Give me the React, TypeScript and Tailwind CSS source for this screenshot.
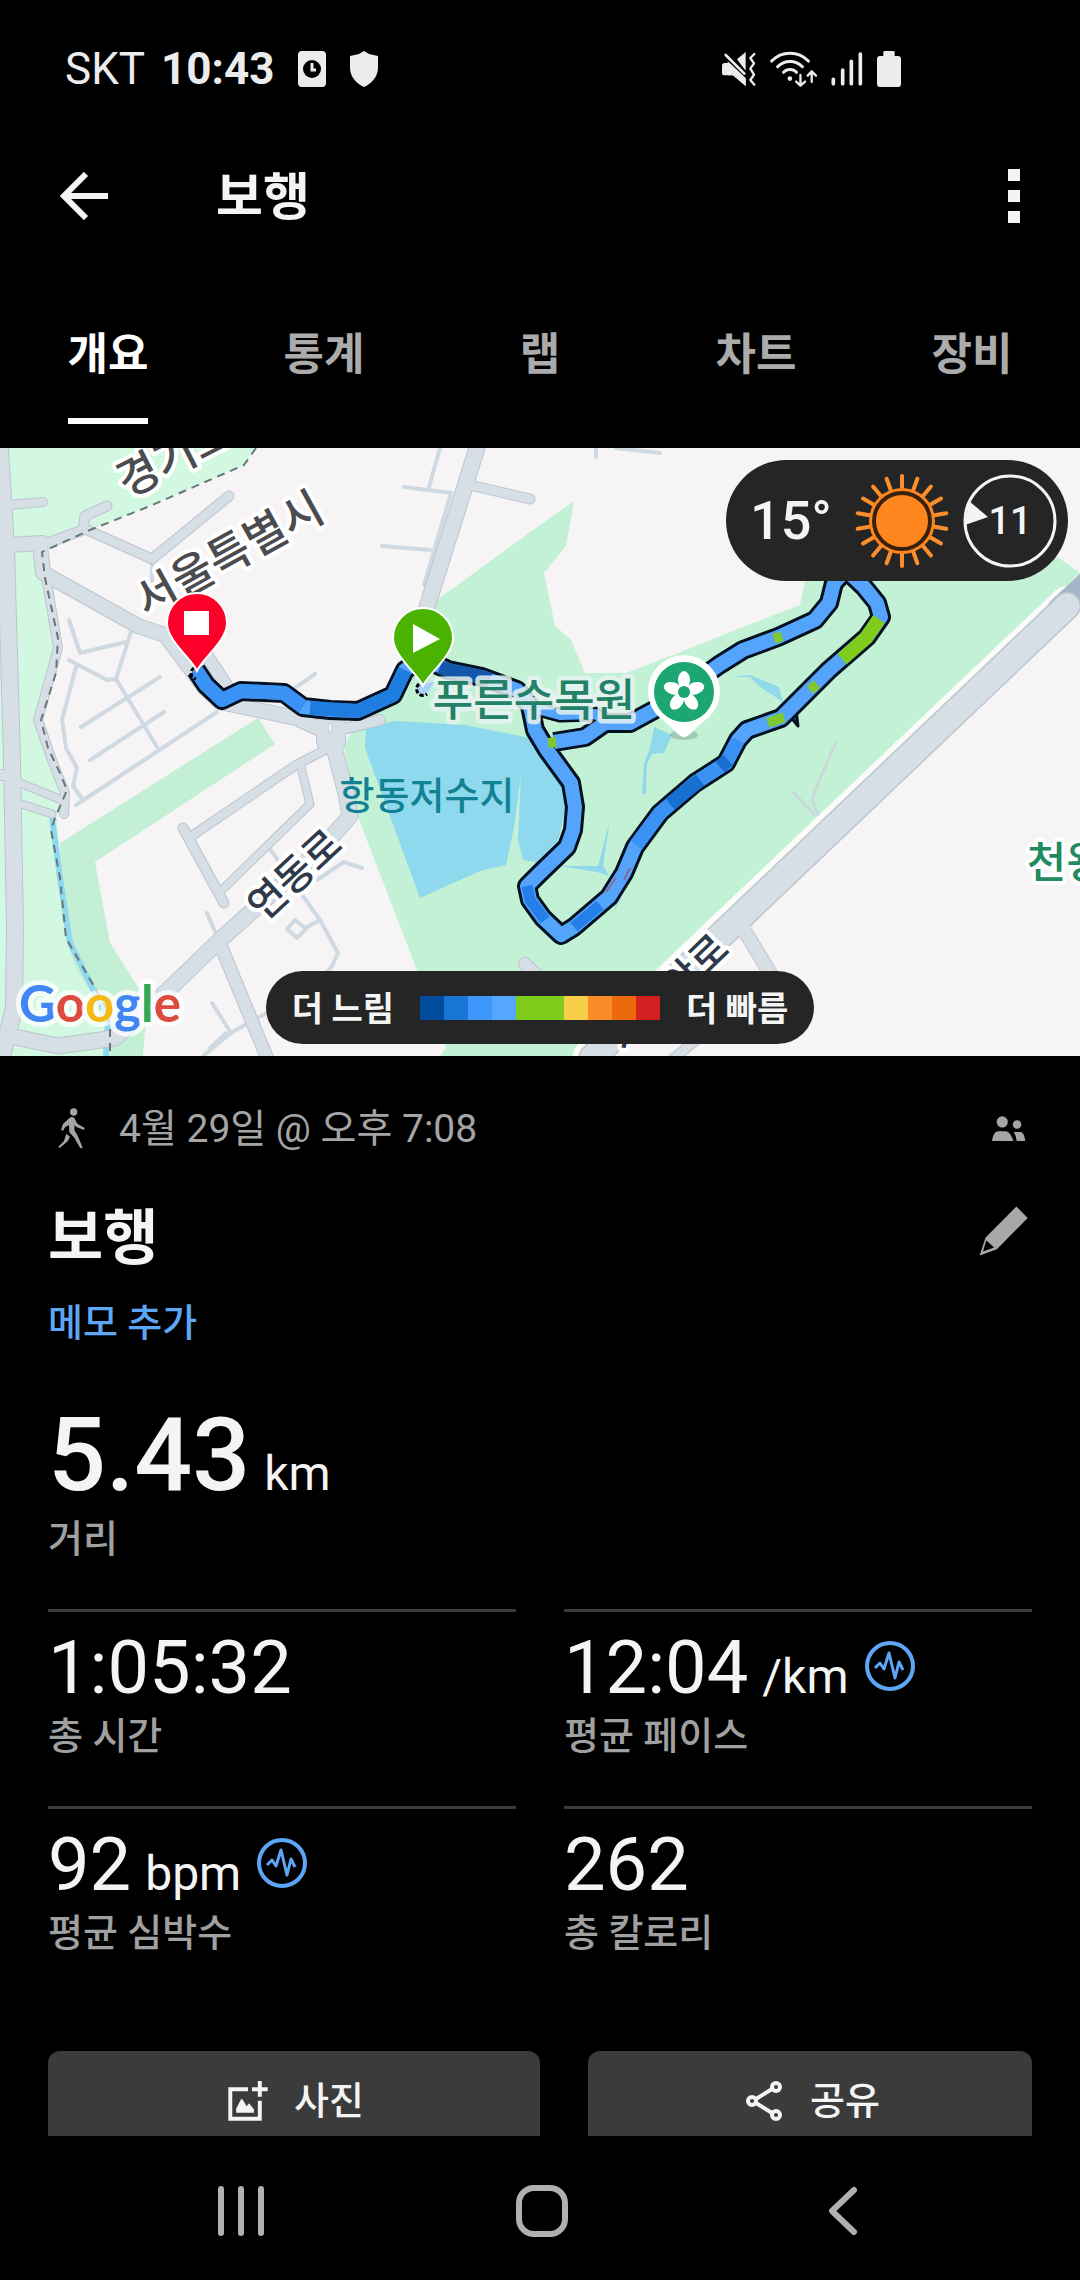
import { useState } from "react";

const TABS = ["개요", "통계", "랩", "차트", "장비"];

const PACE_COLORS = [
  "bg-[#004b9b]",
  "bg-[#1976d2]",
  "bg-[#3d96fb]",
  "bg-[#54a6ff]",
  "bg-[#80cc1c]",
  "bg-[#80cc1c]",
  "bg-[#f8cd48]",
  "bg-[#fa8b26]",
  "bg-[#ec690c]",
  "bg-[#d22120]",
];

const STATS = [
  { value: "1:05:32", unit: "", label: "총 시간", pulse: false },
  { value: "12:04", unit: "/km", label: "평균 페이스", pulse: true },
  { value: "92", unit: "bpm", label: "평균 심박수", pulse: true },
  { value: "262", unit: "", label: "총 칼로리", pulse: false },
];

/* ---------- MAP DATA ---------- */
const ROADS = [
  { d: "M0 0L6 100L12 312L15 480L14 560L2 608", w: 16 },
  { d: "M10 57L43 54", w: 8 },
  { d: "M8 97L42 95", w: 14 },
  { d: "M42 97L83 82L85 68L107 58", w: 9 },
  { d: "M83 80L152 111L229 48", w: 9 },
  { d: "M477 0L427 159L408 225", w: 15 },
  { d: "M474 38L530 51", w: 9 },
  { d: "M40 97L43 125L138 178L165 187L205 240L220 254L296 270L331 286", w: 14 },
  { d: "M205 205L232 246", w: 12 },
  { d: "M42 115L48 140L58 200L38 272L52 312L65 345L64 366", w: 8 },
  { d: "M331 278V292", w: 28 },
  { d: "M331 284L380 272", w: 10 },
  { d: "M332 292L346 345L350 368L322 400L220 492L165 545L115 590L58 598L10 588", w: 15 },
  { d: "M325 302L296 317L193 387", w: 8 },
  { d: "M301 319L310 356L268 397L224 440", w: 7 },
  { d: "M183 380L224 455", w: 9 },
  { d: "M220 496L268 612", w: 12 },
  { d: "M15 333L62 352", w: 7 },
  { d: "M15 354L52 366", w: 7 },
  { d: "M0 327H12", w: 10 },
  { d: "M525 516L548 538", w: 12 },
  { d: "M743 480L785 550", w: 13 },
  { d: "M672 612L725 568", w: 9 },
];

const STREETS =
  "M152 112V133M69 172L80 205L126 194M131 184L116 231L157 299M69 212L107 232L116 231M76 219L62 272L66 300L77 320L73 338L83 352M81 279L160 229M90 312L164 264M76 357L217 264M404 39L451 45M440 0L429 39M451 45L424 137M382 98L430 102M245 241L270 250M315 226L295 240M268 398L290 430L320 472L338 505L332 518L318 535M207 465L217 488M317 432L344 414L362 420M320 472L305 480L295 472L287 481L297 490L307 480M212 555L231 585L203 608M231 585L248 575L285 555M226 585L210 600M596 0V9M616 0L660 5";

const ROUTE =
  "M196 222L206 237L222 252L241 243L284 245L303 259L330 262L358 263L393 247L405 222L423 210L448 222L482 229L517 242L530 258L535 282L547 302L571 335L575 359L573 382L567 399L540 425L527 438L530 452L543 470L561 487L574 479L609 449L624 425L635 399L660 365L695 335L726 315L738 292L747 282L781 270L829 222L867 189L881 169L877 155L864 139L846 122L834 135L829 155L815 172L778 189L743 202L719 217L680 245L654 262L630 275L605 275L585 289L554 294";

const MapPin = ({ x, y, fill }: { x: number; y: number; fill: string }) => (
  <path
    transform={`translate(${x} ${y})`}
    d="M0 48C-5 36-30 18-30 0A30 30 0 0 1 30 0C30 18 5 36 0 48Z"
    fill={fill}
    stroke="#fff"
    strokeWidth="2"
  />
);

const RouteMap = () => (
  <svg
    viewBox="0 0 1080 608"
    preserveAspectRatio="xMidYMid slice"
    className="block w-full h-full font-[Roboto,'Noto_Sans_CJK_KR',sans-serif] font-medium"
  >
    <rect width="1080" height="608" fill="#f6f4f5" />

    {/* parks */}
    <path
      d="M0 0H256L244 17L150 58L90 82L42 104L58 200L38 272L60 330L57 370L66 480L110 560L140 608H0Z"
      fill="#d2f8e1"
    />
    <path
      d="M258 270L275 296L95 414L110 495L138 539L146 570L143 608H110L115 580L75 520L62 470L60 395Z"
      fill="#c3f0d4"
    />
    <path
      d="M540 77L437 152L418 200L385 250L355 275L344 299L358 369L417 522L446 600L440 608H590L709 482L905 292L1080 125L1056 108L1000 60L830 90L805 133L800 157L743 179L678 205L626 225H585L571 192L555 178L544 125L566 98L574 53Z"
      fill="#c3f1d5"
    />

    {/* water */}
    <path
      d="M366 279L396 273L465 277L540 292L566 330V358L557 398L540 415L523 412L518 392L521 327L514 380L506 417L480 423L420 450L365 300Z"
      fill="#8fd9ee"
    />
    <path
      d="M731 229L750 227L779 239L783 254L760 239L750 229ZM654 279L672 287L664 305L652 306L647 316L646 346H642L644 315L650 300ZM560 418L598 418L610 372L603 417L609 428L597 424ZM618 448L621 450L614 464Z"
      fill="#90d9ea"
    />
    <path d="M52 370L60 430L70 495L95 545L108 570L106 608" fill="none" stroke="#8fd9ee" strokeWidth="6" />

    {/* roads */}
    <g fill="none" strokeLinecap="round" strokeLinejoin="round">
      <path d={STREETS} stroke="#cfd9e1" strokeWidth="4" />
      <path d="M836 294L816 340L812 352L821 374M793 344L814 366" stroke="#ccd8dc" strokeWidth="3" />
      {ROADS.map((r) => (
        <path key={r.d} d={r.d} stroke="#bcc5cf" strokeWidth={r.w + 2} />
      ))}
      <path d="M590 608L1067 155" stroke="#fbfbf8" strokeWidth="34" />
      <path d="M1060 162L1100 125" stroke="#a5b5c8" strokeWidth="26" />
      <path d="M592 610L1067 158" stroke="#bcc5cf" strokeWidth="28" />
      {ROADS.map((r) => (
        <path key={r.d} d={r.d} stroke="#d6dee6" strokeWidth={r.w} />
      ))}
      <path d="M592 610L1067 158" stroke="#d6dee6" strokeWidth="25" />
    </g>
    <ellipse cx="330" cy="280" rx="2" ry="5" fill="#f6f4f5" stroke="#bcc5cf" />
    <path
      d="M256 0L244 17L150 58L90 82L42 104L45 130L58 190L56 225L41 272L48 300L60 325L67 342L55 370L51 382L60 430L66 490L95 540L106 560L110 580V608"
      fill="none"
      stroke="#68767c"
      strokeWidth="2"
      strokeDasharray="8 6"
    />

    {/* area and road names */}
    <g textAnchor="middle" paintOrder="stroke" stroke="#fff" strokeWidth="8" strokeLinejoin="round">
      <text transform="translate(175 8) rotate(-27)" y="16" fontSize="45" fill="#4a4c50">
        경기도
      </text>
      <text transform="translate(229 106) rotate(-29)" y="16" fontSize="45" fill="#4a4c50">
        서울특별시
      </text>
      <text transform="translate(294 426) rotate(-43)" y="15" fontSize="40" fill="#2e3a4c">
        연동로
      </text>
      <text transform="translate(668 544) rotate(-44)" y="15" fontSize="40" fill="#2e3a4c">
        서해안로
      </text>
      <text x="427" y="361" fontSize="38" fill="#128292" stroke="none">
        항동저수지
      </text>
      <text x="1086" y="430" fontSize="43" fill="#218a62">
        천왕산
      </text>
    </g>

    {/* walked route */}
    <g fill="none" strokeLinejoin="round">
      <path d="M790 268L798 278L796 262" fill="#1976d2" stroke="#001220" strokeWidth="3" />
      <path d={ROUTE} stroke="#03101f" strokeWidth="20" />
      <path d="M530 259L560 267L595 266L610 275" stroke="#03101f" strokeWidth="15" />
      <path d={ROUTE} stroke="#54a4fc" strokeWidth="14" />
      <path d="M530 259L560 267L595 266L610 275" stroke="#54a4fc" strokeWidth="10" />
      <path d="M196 222L206 237L222 252L241 243L284 245L303 259" stroke="#3a92f5" strokeWidth="14" />
      <path d="M310 260L358 263L393 247L405 222" stroke="#1f7de0" strokeWidth="14" />
      <path d="M440 219L448 222L482 229L490 232" stroke="#1257ac" strokeWidth="14" />
      <path d="M527 438L530 452L545 472M574 479L600 457" stroke="#2480e8" strokeWidth="11" />
      <path d="M636 397L660 365L695 335L726 315L738 292" stroke="#3a92f5" strokeWidth="14" />
      <path d="M670 356L700 332M720 319L728 312" stroke="#1770d0" strokeWidth="14" />
      <path d="M630 420L624 432M616 430L606 444" stroke="#8a6a90" strokeWidth="2" />
      <path d="M879 171L866 190L842 211" stroke="#80cc1c" strokeWidth="14" />
      <path d="M774 191L782 188M810 242L817 236M768 275L784 269M548 295L556 294" stroke="#80c832" strokeWidth="10" />
    </g>

    {/* arboretum */}
    <text
      x="534"
      y="268"
      fontSize="44"
      textAnchor="middle"
      paintOrder="stroke"
      stroke="#e8f3f1"
      strokeOpacity="0.85"
      strokeWidth="9"
      strokeLinejoin="round"
      fill="#238167"
    >
      푸른수목원
    </text>
    <ellipse cx="684" cy="287" rx="14" ry="5" fill="#6f9480" opacity="0.4" />
    <path d="M684 289C678 289 674 280 660 270A36 36 0 1 1 708 270C694 280 690 289 684 289Z" fill="#fff" />
    <circle cx="684" cy="244" r="30" fill="#1ba672" />
    <g fill="#fff">
      {[0, 72, 144, 216, 288].map((a) => (
        <ellipse key={a} cx="684" cy="232" rx="6" ry="9" transform={`rotate(${a} 684 244)`} />
      ))}
    </g>
    <circle cx="684" cy="244" r="6" fill="#1ba672" />

    {/* start and finish */}
    <path d="M194 220A6 6 0 0 0 196 231" fill="none" stroke="#000" strokeWidth="3" strokeDasharray="4 2" />
    <MapPin x={197} y={175} fill="#fd0029" />
    <rect x="184" y="163" width="25" height="24" fill="#fff" />
    <path d="M419 236A6 6 0 0 0 427 246L434 234Z" fill="#a9d0f8" />
    <path d="M419 236A6 6 0 0 0 427 246" fill="none" stroke="#000" strokeWidth="3" strokeDasharray="4 2" />
    <MapPin x={423} y={190} fill="#4ab200" />
    <path d="M413 176V205L440 191Z" fill="#fff" />

    {/* map provider */}
    <g
      className="font-[Lato,sans-serif] font-bold"
      paintOrder="stroke"
      stroke="#fff"
      strokeOpacity="0.75"
      strokeWidth="10"
      strokeLinejoin="round"
    >
      <text x="19" y="574" fontSize="51">
        <tspan fill="#4285f4">G</tspan>
        <tspan fill="#dd4b3e">o</tspan>
        <tspan fill="#f5ba15">o</tspan>
        <tspan fill="#4285f4">g</tspan>
        <tspan fill="#34a853">l</tspan>
        <tspan fill="#dd4b3e">e</tspan>
      </text>
    </g>
  </svg>
);

const SunIcon = () => (
  <svg viewBox="-48 -48 96 96" className="size-24">
    <g stroke="#fb8f2c" strokeWidth="4" strokeLinecap="round">
      {Array.from({ length: 18 }, (_, i) => (
        <line key={i} y1="-33" y2="-45" transform={`rotate(${i * 20})`} />
      ))}
    </g>
    <circle r="33" fill="#ff861f" />
    <circle r="28" fill="none" stroke="#38220f" strokeWidth="4" />
  </svg>
);

const PulseIcon = () => (
  <svg viewBox="-25 -25 50 50" className="mb-1 w-[50px] h-[50px]" fill="none" stroke="#5da6f6">
    <circle r="23" strokeWidth="4" />
    <path d="M-15 2L-10 -3L-6 3L-1 -13L5 12L9 -4L13 4" strokeWidth="3" strokeLinejoin="round" />
  </svg>
);

const StatusBar = () => (
  <div className="flex h-[138px] items-center justify-between pl-[65px] pr-[179px] text-[#ececec]">
    <div className="flex items-center">
      <span className="text-[44px] leading-[48px]">SKT</span>
      <span className="ml-4 text-[44px] leading-[48px] font-bold">10:43</span>
      <svg viewBox="0 0 28 36" className="ml-6 h-9 w-7">
        <rect width="28" height="36" rx="4" fill="#ececec" />
        <circle cx="14" cy="18" r="9" fill="#000" />
        <path d="M14 12V19H18" fill="none" stroke="#ececec" strokeWidth="3" />
      </svg>
      <svg viewBox="0 0 28 36" className="ml-6 h-9 w-7">
        <path d="M14 0L19 3L28 5V17C28 26 21 33 14 36C7 33 0 26 0 17V5L9 3Z" fill="#ececec" />
      </svg>
    </div>
    <div className="flex items-center gap-3.5">
      <svg viewBox="123 60 102 106" className="h-9 w-[34px]">
        <path d="M131 95H146L194 140V164L156 132H131Q123 132 123 124V103Q123 95 131 95ZM194 62V118L168 84Z" fill="#ececec" />
        <path d="M146 76L200 130" stroke="#000" strokeWidth="8" />
        <path d="M134 71L190 127" stroke="#ececec" strokeWidth="8" strokeLinecap="round" />
        <path d="M140 90L194 144V164L156 132H140Z" fill="#ececec" />
        <path d="M220 68L208 80L219 96L208 112L219 130L208 146L220 160" fill="none" stroke="#ececec" strokeWidth="7" strokeLinecap="round" strokeLinejoin="round" />
      </svg>
      <svg viewBox="270 60 142 108" className="h-9 w-[47px]" fill="none" stroke="#ececec" strokeLinecap="round" strokeLinejoin="round">
        <path d="M275 90A77 77 0 0 1 386 90M293 107A52 52 0 0 1 368 107M311 124A27 27 0 0 1 350 124" strokeWidth="9" />
        <circle cx="330" cy="143" r="7" fill="#ececec" stroke="none" />
        <path d="M362 132V163M349 152L362 164L376 152M396 153V122M384 134L396 121L409 134" strokeWidth="7" />
      </svg>
      <svg viewBox="444 62 96 104" className="h-9 w-8" stroke="#ececec" strokeWidth="11" strokeLinecap="round">
        <path d="M451 145V158M479 117V158M505 91V158M532 69V158" />
      </svg>
      <svg viewBox="591 60 72 108" className="h-9 w-6" fill="#ececec">
        <rect x="610" y="60" width="34" height="24" rx="4" />
        <rect x="591" y="75" width="72" height="93" rx="9" />
      </svg>
    </div>
  </div>
);

const App = () => {
  const [activeTab, setActiveTab] = useState("개요");

  return (
    <div className="flex h-screen flex-col bg-black text-[#f4f4f4] font-[Roboto,'Noto_Sans_CJK_KR',sans-serif]">
      <StatusBar />

      {/* HEADER */}
      <header className="flex h-[116px] items-center px-[60px]">
        <button aria-label="뒤로">
          <svg viewBox="0 0 48 48" className="size-12" fill="none" stroke="#f4f4f4" strokeWidth="6">
            <path d="M26 2L4 24L26 46M5 24H48" />
          </svg>
        </button>
        <h1 className="ml-[108px] flex-1 pt-1 text-[51px] leading-[60px] font-bold">보행</h1>
        <button aria-label="더보기" className="flex flex-col gap-[9px]">
          <span className="size-3 bg-[#f4f4f4]" />
          <span className="size-3 bg-[#f4f4f4]" />
          <span className="size-3 bg-[#f4f4f4]" />
        </button>
      </header>

      {/* TABS */}
      <nav className="grid h-[194px] shrink-0 grid-cols-5 items-end pb-6">
        {TABS.map((tab) => (
          <button
            key={tab}
            onClick={() => setActiveTab(tab)}
            className={
              tab === activeTab
                ? "justify-self-center border-b-6 border-white pb-[39px] text-[44px] leading-[48px] font-bold text-white"
                : "justify-self-center border-b-6 border-transparent pb-[39px] text-[44px] leading-[48px] font-bold text-[#ababab]"
            }
          >
            {tab}
          </button>
        ))}
      </nav>

      <main className="min-h-0 flex-1 overflow-hidden">
        {/* MAP */}
        <section className="relative h-[608px] overflow-hidden">
          <RouteMap />
          <div className="absolute top-3 right-3 flex h-[121px] items-center rounded-full bg-[#252525] pl-6 pr-2.5">
            <span className="mr-[22px] text-[54px] leading-[60px] font-medium">15°</span>
            <SunIcon />
            <span className="relative ml-3 flex size-24 items-center justify-center">
              <svg viewBox="-48 -48 96 96" className="absolute inset-0">
                <circle r="45" fill="none" stroke="#f4f4f4" strokeWidth="3" />
                <path d="M-41 -20L-22 -4L-45 4Z" fill="#f4f4f4" />
              </svg>
              <span className="text-[38px] leading-[48px] font-medium">11</span>
            </span>
          </div>
          <div className="absolute inset-x-0 bottom-3 flex justify-center">
            <div className="flex h-[73px] items-center gap-[26px] rounded-full bg-[#252525] px-[26px] text-[34px] leading-[48px] font-bold">
              <span className="pt-0.5">더 느림</span>
              <span className="flex">
                {PACE_COLORS.map((color, i) => (
                  <span key={i} className={`size-6 ${color}`} />
                ))}
              </span>
              <span className="pt-0.5">더 빠름</span>
            </div>
          </div>
        </section>

        {/* SUMMARY */}
        <section className="px-12">
          <div className="flex h-36 items-center text-[39px] leading-[48px] text-[#a5a5a5]">
            <svg viewBox="55 37 81 123" className="ml-2.5 h-[41px] w-[27px]" fill="#a5a5a5">
              <circle cx="102" cy="49" r="11" />
              <path d="M90 66Q97 62 104 67L113 84L135 97L133 103L110 94L105 88L104 104L113 118L129 156L122 158L104 126L89 110L88 88L77 94L70 105L64 103L70 85Z" />
              <path d="M80 114L91 123L84 137L60 157L56 153L73 136Z" />
            </svg>
            <p className="ml-[34px] flex-1 pt-0.5">4월 29일 @ 오후 7:08</p>
            <svg viewBox="62 62 104 76" className="mr-1.5 h-[25px] w-[35px]" fill="#a5a5a5">
              <circle cx="95" cy="80" r="17" />
              <path d="M64 138Q67 108 84 108H106Q120 110 129 138Z" />
              <circle cx="140" cy="88" r="13" />
              <path d="M130 111H152Q162 114 165 138H139Q136 120 130 111Z" />
            </svg>
          </div>

          <div className="flex h-[74px] items-center justify-between">
            <h2 className="pt-1 text-[60px] leading-[74px] font-bold">보행</h2>
            <button aria-label="이름 수정" className="mr-1 pb-3">
              <svg viewBox="22 330 148 150" className="h-[50px] w-[49px]">
                <path d="M135 331L169 366L76 460L24 479L42 425Z" fill="#a8a8a8" />
                <path d="M44 434L34 467L68 455Z" fill="#000" />
              </svg>
            </button>
          </div>
          <a href="#memo" className="mt-[25px] block w-fit text-[38px] leading-[48px] font-medium text-[#5da6f6]">
            메모 추가
          </a>

          <p className="mt-[58px] flex items-baseline gap-3.5 text-[102px] leading-[100px] font-medium">
            5.43 <span className="text-[48px] leading-[48px] font-normal">km</span>
          </p>
          <p className="mt-2.5 text-[38px] leading-[48px] font-medium text-[#a0a0a0]">거리</p>

          {/* STATS */}
          <div className="mt-[46px] grid grid-cols-2 gap-x-12">
            {STATS.map((stat) => (
              <div key={stat.label} className="border-t-3 border-[#3b3b3b] pt-4 pb-[46px]">
                <div className="flex h-20 items-center gap-4">
                  <p className="flex items-baseline gap-3.5 text-[74px] leading-[80px]">
                    {stat.value}
                    {stat.unit && <span className="text-[48px] leading-[48px]">{stat.unit}</span>}
                  </p>
                  {stat.pulse && <PulseIcon />}
                </div>
                <p className="mt-1 text-[38px] leading-[48px] font-medium text-[#a0a0a0]">{stat.label}</p>
              </div>
            ))}
          </div>

          {/* ACTIONS */}
          <div className="mt-12 flex gap-12 text-[38px] leading-[48px] font-medium">
            <button className="flex h-24 w-1/2 items-center justify-center gap-[26px] rounded-xl bg-[#3b3b3b] pl-1 pt-1">
              <svg viewBox="57 50 120 122" className="size-10" fill="none" stroke="#f4f4f4" strokeWidth="12">
                <path d="M117 75H63V165H153V110M129 75H177M153 50V98" />
                <path d="M81 147V134L95 107Q98 103 101 107L113 127L120 118L135 136V147Z" fill="#f4f4f4" stroke="none" />
              </svg>
              사진
            </button>
            <button className="flex h-24 flex-1 items-center justify-center gap-7 rounded-xl bg-[#3b3b3b] pl-1.5 pt-1">
              <svg viewBox="0 0 36 40" className="h-10 w-9" fill="none" stroke="#f4f4f4" strokeWidth="4">
                <circle cx="30" cy="6" r="4" />
                <circle cx="6" cy="20" r="4" />
                <circle cx="30" cy="34" r="4" />
                <path d="M10 18L26 8M10 22L26 32" />
              </svg>
              공유
            </button>
          </div>
        </section>
      </main>

      {/* SYSTEM NAVIGATION */}
      <footer className="grid h-36 shrink-0 grid-cols-3 items-center justify-items-center pl-[90px] pr-[86px] pt-1.5">
        <button aria-label="최근 앱">
          <svg viewBox="0 0 48 52" className="h-[52px] w-12" stroke="#b0b0b0" strokeWidth="6" strokeLinecap="round">
            <path d="M4 4V48M24 4V48M44 4V48" />
          </svg>
        </button>
        <button aria-label="홈">
          <svg viewBox="0 0 52 52" className="size-[52px]" fill="none" stroke="#b0b0b0" strokeWidth="6">
            <rect x="3" y="3" width="46" height="46" rx="15" />
          </svg>
        </button>
        <button aria-label="이전">
          <svg viewBox="0 0 30 50" className="h-[50px] w-[30px]" fill="none" stroke="#b0b0b0" strokeWidth="6" strokeLinecap="round" strokeLinejoin="round">
            <path d="M26 4L4 25L26 46" />
          </svg>
        </button>
      </footer>
    </div>
  );
};

export default App;
